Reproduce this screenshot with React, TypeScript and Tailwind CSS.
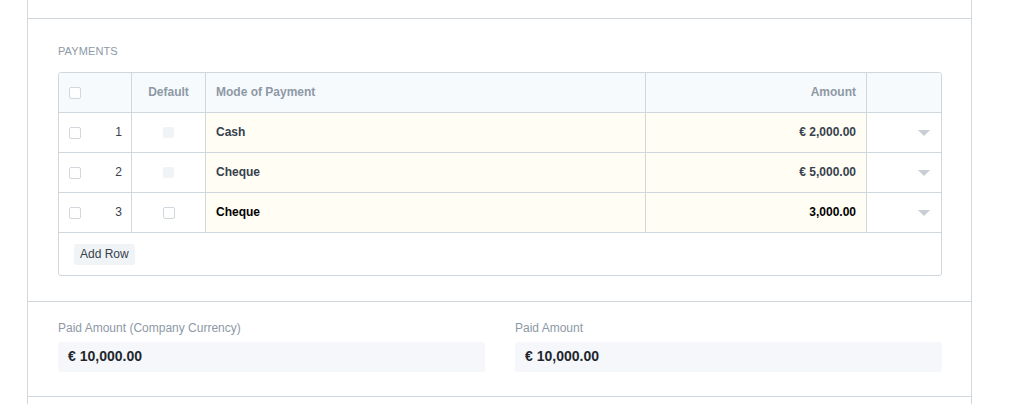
import React from "react";

const font = { fontFamily: '"Liberation Sans", Arial, sans-serif' };

function Check({ disabled }: { disabled?: boolean }) {
  if (disabled) {
    return <div className="w-[11px] h-[11px] rounded-[2px] bg-[#f0f4f7]" />;
  }
  return <div className="w-[12px] h-[12px] rounded-[2px] border border-[#d1d8dd] bg-white" />;
}

function Caret() {
  return (
    <svg width="12" height="6" viewBox="0 0 12 6">
      <path d="M0 0 L12 0 L6 6 Z" fill="#c8ced3" />
    </svg>
  );
}

const rows = [
  { n: 1, mode: "Cash", amt: "€ 2,000.00", disabled: true, dark: false },
  { n: 2, mode: "Cheque", amt: "€ 5,000.00", disabled: true, dark: false },
  { n: 3, mode: "Cheque", amt: "3,000.00", disabled: false, dark: true },
];

const grid = "grid grid-cols-[72px_74px_440px_221px_1fr]";

export default function App() {
  return (
    <div className="w-[1010px] h-[404px] bg-white overflow-hidden" style={font}>
      <div className="ml-[27px] w-[945px] h-[404px] border-l border-r border-[#d1d8dd]">
        <div className="h-[19px] border-b border-[#d1d8dd]" />
        <div className="h-[283px] border-b border-[#d1d8dd] pl-[30px] pt-[24px]">
          <div className="text-[11px] leading-[16px] text-[#8d99a6] uppercase tracking-[0.1px]">Payments</div>
          <div className="mt-[13px] w-[884px] border border-[#d1d8dd] rounded-[3px] overflow-hidden">
            <div className={`${grid} h-[40px] bg-[#f7fafc] border-b border-[#d1d8dd] text-[12px] font-bold text-[#8d99a6]`}>
              <div className="flex items-center pl-[10px]">
                <Check />
              </div>
              <div className="flex items-center justify-center pb-[1px] border-l border-[#d1d8dd]">Default</div>
              <div className="flex items-center pl-[10px] pb-[1px] border-l border-[#d1d8dd]">Mode of Payment</div>
              <div className="flex items-center justify-end pr-[10px] pb-[1px] border-l border-[#d1d8dd]">Amount</div>
              <div className="border-l border-[#d1d8dd]" />
            </div>
            {rows.map((r) => (
              <div
                key={r.n}
                className={`${grid} h-[40px] border-b border-[#d1d8dd] text-[12px] ${r.dark ? "text-black" : "text-[#36414c]"}`}
              >
                <div className="flex items-center justify-between pl-[10px] pr-[9px] text-[#36414c] font-normal">
                  <Check />
                  <span className="pb-[1px]">{r.n}</span>
                </div>
                <div className="flex items-center justify-center border-l border-[#d1d8dd]">
                  <Check disabled={r.disabled} />
                </div>
                <div className="flex items-center pl-[10px] pb-[1px] border-l border-[#d1d8dd] bg-[#fffdf4] font-bold">
                  {r.mode}
                </div>
                <div className="flex items-center justify-end pr-[10px] pb-[1px] border-l border-[#d1d8dd] bg-[#fffdf4] font-bold">
                  {r.amt}
                </div>
                <div className="flex items-center justify-end pr-[11px] border-l border-[#d1d8dd]">
                  <Caret />
                </div>
              </div>
            ))}
            <div className="h-[42px] flex items-center pl-[15px]">
              <div className="h-[21px] px-[6px] flex items-center rounded-[3px] bg-[#f0f4f7] text-[12px] text-[#36414c]">
                Add Row
              </div>
            </div>
          </div>
        </div>
        <div className="h-[95px] border-b border-[#d1d8dd] pl-[30px] pr-[29px] pt-[18px] grid grid-cols-2 gap-[30px]">
          {["Paid Amount (Company Currency)", "Paid Amount"].map((l) => (
            <div key={l}>
              <div className="text-[12px] leading-[16px] text-[#8d99a6]">{l}</div>
              <div className="mt-[6px] h-[30px] rounded-[3px] bg-[#f5f7fa] flex items-center pl-[10px] pb-[1px] text-[14px] font-bold text-[#1f272e]">
                € 10,000.00
              </div>
            </div>
          ))}
        </div>
      </div>
    </div>
  );
}
